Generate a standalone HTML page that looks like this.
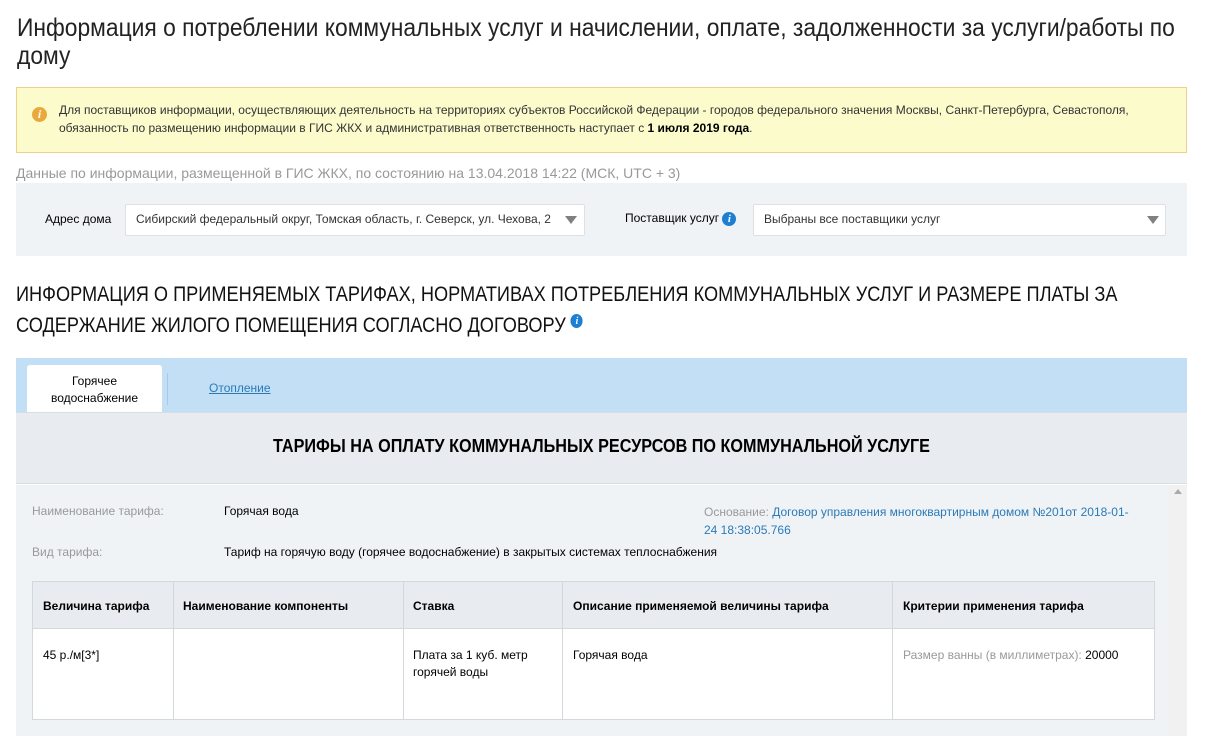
<!DOCTYPE html>
<html><head><meta charset="utf-8"><style>
*{margin:0;padding:0;box-sizing:border-box}
body{width:1205px;height:736px;overflow:hidden;background:#fff;font-family:"Liberation Sans",sans-serif;color:#000;position:relative}
.a{position:absolute;white-space:nowrap}
.h1{font-size:25px;line-height:28px;color:#222;transform:scaleX(0.913);transform-origin:0 0}
.s{font-size:12px}
.g{color:#999}
.b{color:#2a7ab8}
.info{display:inline-block;width:14px;height:14px;border-radius:50%;background:#1c7fd1;color:#fff;font:italic bold 11px/14px "Liberation Serif",serif;text-align:center}
.tbl{position:absolute;left:32px;top:581px;width:1123px;height:139px;border:1px solid #d3d8dd;background:#fff}
.tbl .hd{position:absolute;left:0;top:0;width:100%;height:47px;background:#e8ecf0;border-bottom:1px solid #d3d8dd}
.vl{position:absolute;top:0;bottom:0;width:1px;background:#d3d8dd}
.th{position:absolute;top:17px;font-size:12px;font-weight:bold}
.td{position:absolute;top:65px;font-size:12px;line-height:17px}
</style></head><body>
<div class="a h1" style="left:17px;top:14px">Информация о потреблении коммунальных услуг и начислении, оплате, задолженности за услуги/работы по</div>
<div class="a h1" style="left:17px;top:42px">дому</div>

<div class="a" style="left:16px;top:87px;width:1171px;height:66px;background:#fbfbcc;border:1px solid #f2d08a"></div>
<div class="a" style="left:32px;top:107px;width:15px;height:15px;border-radius:50%;background:#e9a93b;color:#fff;font:italic bold 12px/15px 'Liberation Serif',serif;text-align:center">i</div>
<div class="a s" style="left:59px;top:103px;color:#333">Для поставщиков информации, осуществляющих деятельность на территориях субъектов Российской Федерации - городов федерального значения Москвы, Санкт-Петербурга, Севастополя,</div>
<div class="a s" style="left:59px;top:121px;color:#333">обязанность по размещению информации в ГИС ЖКХ и административная ответственность наступает с <b style="color:#000">1 июля 2019 года</b>.</div>

<div class="a g" style="left:16px;top:165px;font-size:14px">Данные по информации, размещенной в ГИС ЖКХ, по состоянию на 13.04.2018 14:22 (МСК, UTC + 3)</div>
<div class="a" style="left:16px;top:183px;width:1171px;height:73px;background:#f0f3f6"></div>
<div class="a" style="left:45px;top:212px;font-size:12px">Адрес дома</div>
<div class="a" style="left:125px;top:204px;width:460px;height:32px;background:#fff;border:1px solid #dde1e5;border-radius:2px"></div>
<div class="a s" style="left:136px;top:212px;color:#333">Сибирский федеральный округ, Томская область, г. Северск, ул. Чехова, 2</div>
<div class="a" style="left:565px;top:216px;border-left:6px solid transparent;border-right:6px solid transparent;border-top:8px solid #808080"></div>
<div class="a" style="left:625px;top:211px;font-size:12px">Поставщик услуг <span class="info">i</span></div>
<div class="a" style="left:753px;top:204px;width:413px;height:32px;background:#fff;border:1px solid #dde1e5;border-radius:2px"></div>
<div class="a s" style="left:764px;top:212px;color:#333">Выбраны все поставщики услуг</div>
<div class="a" style="left:1147px;top:216px;border-left:6px solid transparent;border-right:6px solid transparent;border-top:8px solid #808080"></div>

<div class="a" style="left:16px;top:279px;font-size:21px;line-height:31px;color:#111;transform:scaleX(0.865);transform-origin:0 0">ИНФОРМАЦИЯ О ПРИМЕНЯЕМЫХ ТАРИФАХ, НОРМАТИВАХ ПОТРЕБЛЕНИЯ КОММУНАЛЬНЫХ УСЛУГ И РАЗМЕРЕ ПЛАТЫ ЗА<br>СОДЕРЖАНИЕ ЖИЛОГО ПОМЕЩЕНИЯ СОГЛАСНО ДОГОВОРУ <span class="info" style="vertical-align:8px">i</span></div>

<div class="a" style="left:16px;top:358px;width:1171px;height:54px;background:#c2dff5"></div>
<div class="a" style="left:27px;top:365px;width:135px;height:47px;background:#fff;border-radius:3px 3px 0 0;text-align:center;font-size:12px;line-height:17px;padding-top:8px">Горячее<br>водоснабжение</div>
<div class="a" style="left:167px;top:373px;width:1px;height:32px;background:#aac8e0"></div>
<div class="a b" style="left:209px;top:381px;font-size:12px;text-decoration:underline">Отопление</div>
<div class="a" style="left:16px;top:412px;width:1171px;height:72px;background:#e8ecf0;border-top:1px solid #d6dde3;border-bottom:1px solid #d6dde3"></div>
<div class="a" style="left:273px;top:436px;font-size:18px;font-weight:bold;transform:scaleX(0.9);transform-origin:0 0">ТАРИФЫ НА ОПЛАТУ КОММУНАЛЬНЫХ РЕСУРСОВ ПО КОММУНАЛЬНОЙ УСЛУГЕ</div>
<div class="a" style="left:16px;top:485px;width:1152px;height:251px;background:#f0f3f6"></div>
<div class="a" style="left:1168px;top:485px;width:19px;height:251px;background:#f1f1f1"></div>
<div class="a" style="left:1174px;top:489px;border-left:4px solid transparent;border-right:4px solid transparent;border-bottom:5px solid #aaa"></div>

<div class="a s g" style="left:32px;top:504px">Наименование тарифа:</div>
<div class="a s" style="left:224px;top:504px">Горячая вода</div>
<div class="a s" style="left:704px;top:503px;line-height:18px"><span class="g">Основание:</span> <span class="b">Договор управления многоквартирным домом №201от 2018-01-<br>24 18:38:05.766</span></div>
<div class="a s g" style="left:32px;top:545px">Вид тарифа:</div>
<div class="a s" style="left:224px;top:545px">Тариф на горячую воду (горячее водоснабжение) в закрытых системах теплоснабжения</div>

<div class="tbl"><div class="hd"></div>
<div class="vl" style="left:140px"></div><div class="vl" style="left:370px"></div><div class="vl" style="left:529px"></div><div class="vl" style="left:859px"></div>
<div class="th" style="left:10px">Величина тарифа</div>
<div class="th" style="left:150px">Наименование компоненты</div>
<div class="th" style="left:380px">Ставка</div>
<div class="th" style="left:540px">Описание применяемой величины тарифа</div>
<div class="th" style="left:870px">Критерии применения тарифа</div>
<div class="td" style="left:10px">45 р./м[3*]</div>
<div class="td" style="left:380px">Плата за 1 куб. метр<br>горячей воды</div>
<div class="td" style="left:540px">Горячая вода</div>
<div class="td" style="left:870px"><span class="g">Размер ванны (в миллиметрах):</span> 20000</div>
</div>
</body></html>
